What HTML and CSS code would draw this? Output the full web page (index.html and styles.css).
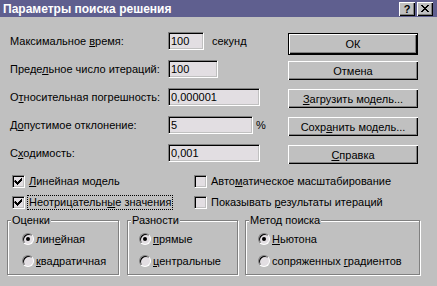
FILE: index.html
```html
<!DOCTYPE html>
<html lang="ru">
<head>
    <meta charset="UTF-8">
    <title>Параметры поиска решения</title>
    <link rel="stylesheet" href="styles.css">
</head>
<body>
    <div class="window">
        <div class="titlebar">
            <span class="title">Параметры поиска решения</span>
            <div class="tb-buttons">
                <span class="tb-btn help">?</span>
                <span class="tb-btn">
                    <svg width="8" height="7" viewBox="0 0 8 7">
                        <path d="M0 0h2v1h1v1h2v-1h1v-1h2v1h-1v1h-1v1h-1v1h1v1h1v1h1v1h-2v-1h-1v-1h-2v1h-1v1h-2v-1h1v-1h1v-1h1v-1h-1v-1h-1v-1h-1z" fill="#000"/>
                    </svg>
                </span>
            </div>
        </div>

        <div class="content">
            <div class="top">
                <label class="lbl">Максимальное <u>в</u>ремя:</label>
                <div class="cell"><span class="field w35">100</span><span class="unit">секунд</span></div>
                <div class="btn btn-default">ОК</div>

                <label class="lbl">Преде<u>л</u>ьное число итераций:</label>
                <div class="cell"><span class="field w49">100</span></div>
                <div class="btn">Отмена</div>

                <label class="lbl">О<u>т</u>носительная погрешность:</label>
                <div class="cell"><span class="field w91">0,000001</span></div>
                <div class="btn"><span><u>З</u>агрузить модель...</span></div>

                <label class="lbl">Д<u>о</u>пустимое отклонение:</label>
                <div class="cell"><span class="field w84">5</span><span class="unit pct">%</span></div>
                <div class="btn"><span>Сохр<u>а</u>нить модель...</span></div>

                <label class="lbl">С<u>х</u>одимость:</label>
                <div class="cell"><span class="field w92">0,001</span></div>
                <div class="btn"><span><u>С</u>правка</span></div>
            </div>

            <div class="checks">
                <div class="check">
                    <span class="box checked"><svg width="9" height="9" viewBox="0 0 9 9"><path d="M1 3h1v1h1v1h1v-1h1v-1h1v-1h1v-1h1v3h-1v1h-1v1h-1v1h-1v1h-1v-1h-1v-1h-1v-1h-1z" fill="#000"/></svg></span>
                    <span class="ctext"><u>Л</u>инейная модель</span>
                </div>
                <div class="check">
                    <span class="box"></span>
                    <span class="ctext">Авто<u>м</u>атическое масштабирование</span>
                </div>
                <div class="check">
                    <span class="box checked"><svg width="9" height="9" viewBox="0 0 9 9"><path d="M1 3h1v1h1v1h1v-1h1v-1h1v-1h1v-1h1v3h-1v1h-1v1h-1v1h-1v1h-1v-1h-1v-1h-1v-1h-1z" fill="#000"/></svg></span>
                    <span class="ctext focus">Неотрицательн<u>ы</u>е значения</span>
                </div>
                <div class="check">
                    <span class="box"></span>
                    <span class="ctext">Показывать <u>р</u>езультаты итераций</span>
                </div>
            </div>

            <div class="groups">
                <div class="group g-est">
                    <span class="group-title">Оценки</span>
                    <div class="radio-row"><span class="radio on"></span><span>лин<u>е</u>йная</span></div>
                    <div class="radio-row"><span class="radio"></span><span><u>к</u>вадратичная</span></div>
                </div>
                <div class="group g-diff">
                    <span class="group-title">Разности</span>
                    <div class="radio-row"><span class="radio on"></span><span><u>п</u>рямые</span></div>
                    <div class="radio-row"><span class="radio"></span><span><u>ц</u>ентральные</span></div>
                </div>
                <div class="group g-method">
                    <span class="group-title">Метод поиска</span>
                    <div class="radio-row"><span class="radio on"></span><span><u>Н</u>ьютона</span></div>
                    <div class="radio-row"><span class="radio"></span><span>сопряженных <u>г</u>радиентов</span></div>
                </div>
            </div>
        </div>
    </div>
</body>
</html>
```

FILE: styles.css
```css
:root {
    --face: #c0c0c0;
    --shadow: #808080;
    --dark: #000;
    --light: #fff;
    --well: #e2dee2;
    --caption: #5f5f8f;
}

* {
    margin: 0;
    padding: 0;
    box-sizing: border-box;
}

body {
    font-family: "Liberation Sans", Arial, sans-serif;
    font-size: 11px;
    color: #000;
    background-color: var(--face);
    width: 437px;
    height: 286px;
    overflow: hidden;
}

u {
    text-decoration-thickness: 1px;
    text-underline-offset: 1px;
}

.window {
    width: 437px;
    height: 286px;
    background-color: var(--face);
}

/* Заголовок окна */
.titlebar {
    height: 17px;
    background-color: var(--caption);
    display: flex;
    align-items: center;
    justify-content: space-between;
    padding: 0 4px 0 3px;
}

.title {
    color: #fff;
    font-weight: bold;
    font-size: 12px;
}

.tb-buttons {
    display: flex;
    gap: 2px;
}

.tb-btn {
    width: 16px;
    height: 14px;
    background-color: var(--face);
    display: flex;
    align-items: center;
    justify-content: center;
    box-shadow: inset 1px 1px var(--light), inset -1px -1px var(--dark), inset -2px -2px var(--shadow);
}

.tb-btn.help {
    font-weight: bold;
    font-size: 11px;
    line-height: 12px;
}

/* Основная часть */
.content {
    padding: 15px 0 0 10px;
}

.top {
    display: grid;
    grid-template-columns: 158px 120px 130px;
    grid-auto-rows: 28px;
}

.lbl {
    line-height: 18px;
    white-space: nowrap;
}

.cell {
    display: flex;
    align-items: flex-start;
}

.field {
    height: 18px;
    line-height: 16px;
    padding-left: 2px;
    background-color: var(--well);
    border: 1px solid;
    border-color: var(--shadow) var(--light) var(--light) var(--shadow);
    box-shadow: inset 1px 1px var(--dark), inset -1px -1px var(--face);
}

.w35 { width: 36px; }
.w49 { width: 50px; }
.w91 { width: 92px; }
.w84 { width: 85px; }
.w92 { width: 92px; }

.unit {
    line-height: 18px;
    margin-left: 8px;
}

.unit.pct {
    margin-left: 3px;
}

.btn {
    height: 19px;
    margin-top: 1px;
    display: flex;
    align-items: center;
    justify-content: center;
    background-color: var(--face);
    box-shadow: inset 1px 1px var(--light), inset -1px -1px var(--dark), inset -2px -2px var(--shadow);
}

.btn-default {
    height: 22px;
    border: 1px solid var(--dark);
}

/* Флажки */
.checks {
    display: grid;
    grid-template-columns: 182px auto;
    grid-auto-rows: 21px;
    margin-top: -1px;
    padding-left: 2px;
}

.check {
    display: flex;
    align-items: center;
    gap: 2px;
}

.box {
    width: 13px;
    height: 13px;
    display: flex;
    align-items: center;
    justify-content: center;
    background-color: var(--well);
    border: 1px solid;
    border-color: var(--shadow) var(--light) var(--light) var(--shadow);
    box-shadow: inset 1px 1px var(--dark), inset -1px -1px var(--face);
}

.ctext {
    border: 1px dotted transparent;
    padding: 0 1px;
    line-height: 13px;
    white-space: nowrap;
}

.ctext.focus {
    border-color: #000;
}

/* Группы */
.groups {
    display: flex;
    margin: 7px 0 0 -3px;
}

.group {
    position: relative;
    height: 55px;
    padding-top: 7px;
    border: 1px solid var(--shadow);
    box-shadow: inset 1px 1px var(--light), 1px 1px var(--light);
}

.group-title {
    position: absolute;
    top: -7px;
    left: 3px;
    padding: 0 1px;
    line-height: 13px;
    background-color: var(--face);
}

.g-est {
    width: 112px;
    padding-left: 14px;
    margin-right: 8px;
}

.g-diff {
    width: 111px;
    padding-left: 11px;
    margin-right: 7px;
}

.g-method {
    width: 175px;
    padding-left: 12px;
}

.radio-row {
    height: 22px;
    display: flex;
    align-items: center;
    gap: 2px;
    white-space: nowrap;
}

.radio {
    position: relative;
    width: 12px;
    height: 12px;
    border-radius: 50%;
    background-color: var(--well);
    border: 1px solid;
    border-color: var(--shadow) var(--light) var(--light) var(--shadow);
    box-shadow: inset 1px 1px var(--dark);
}

.radio.on::after {
    content: "";
    position: absolute;
    left: 3px;
    top: 3px;
    width: 4px;
    height: 4px;
    border-radius: 50%;
    background-color: #000;
}
```
